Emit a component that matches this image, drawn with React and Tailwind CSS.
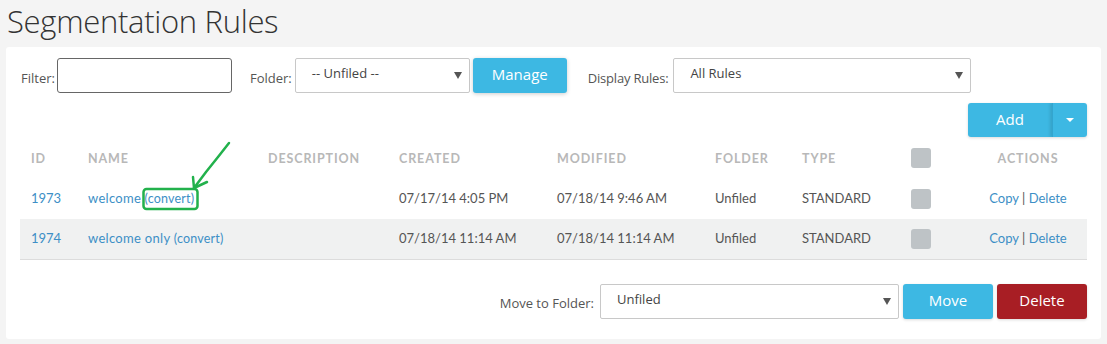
import React from 'react';

const rows = [
  { id: '1973', name: 'welcome', created: '07/17/14 4:05 PM', modified: '07/18/14 9:46 AM', folder: 'Unfiled', type: 'STANDARD' },
  { id: '1974', name: 'welcome only', created: '07/18/14 11:14 AM', modified: '07/18/14 11:14 AM', folder: 'Unfiled', type: 'STANDARD' },
];

function Select({ value, className }) {
  return (
    <div className={`flex h-[35px] items-center justify-between rounded-[2px] border border-[#c8c8c8] bg-white pl-4 pr-[7px] text-[13px] text-[#444] ${className}`}>
      <span className="-mt-[3px]">{value}</span>
      <span className="h-0 w-0 border-x-[4px] border-t-[7px] border-x-transparent border-t-[#555]" />
    </div>
  );
}

function Check() {
  return <div className="h-5 w-5 rounded-[3px] bg-[#bec3c6]" />;
}

export default function App() {
  return (
    <div className="relative min-h-[344px] bg-[#f4f4f4] px-[6px] pt-[1px] font-['Open_Sans',sans-serif]">
      <h1 className="pl-px text-[31px] font-light leading-[40px] tracking-[-0.3px] text-[#333]">Segmentation Rules</h1>

      <div className="mt-[6px] rounded-[3px] bg-white px-[14px] pb-[20px] pt-[11px]">
        <div className="flex items-center">
          <span className="mt-[6px] pl-px pr-[2px] text-[13px] text-[#555]">Filter:</span>
          <div className="h-[35px] w-[175px] rounded-[3px] border border-[#666]" />
          <span className="ml-[18px] mt-[6px] pr-[3px] text-[13px] text-[#555]">Folder:</span>
          <Select value="-- Unfiled --" className="w-[175px]" />
          <button className="ml-[3px] h-[35px] w-[94px] rounded-[3px] bg-[#3db8e3] pb-[2px] text-[15px] text-white shadow-[0_1px_4px_rgba(0,0,0,0.2)]">Manage</button>
          <span className="ml-[21px] mt-[6px] pr-[5px] text-[13px] tracking-[-0.2px] text-[#555]">Display Rules:</span>
          <Select value="All Rules" className="w-[298px]" />
        </div>

        <div className="mt-[10px] flex justify-end">
          <div className="flex h-[34px] overflow-hidden rounded-[3px] bg-[#3db8e3] shadow-[0_1px_3px_rgba(0,0,0,0.15)]">
            <button className="w-[84px] pb-[2px] text-[15px] text-white">Add</button>
            <div className="flex w-[35px] items-center justify-center border-l border-[#32a5cf] shadow-[-2px_0_3px_rgba(0,0,0,0.12)]">
              <span className="h-0 w-0 border-x-[4px] border-t-[4px] border-x-transparent border-t-white" />
            </div>
          </div>
        </div>

        <table className="w-full table-fixed border-collapse font-['Lato',sans-serif]">
          <colgroup>
            <col className="w-[57px]" />
            <col className="w-[180px]" />
            <col className="w-[131px]" />
            <col className="w-[158px]" />
            <col className="w-[158px]" />
            <col className="w-[87px]" />
            <col className="w-[109px]" />
            <col className="w-[67px]" />
            <col />
          </colgroup>
          <thead>
            <tr className="h-[42px] text-left text-[12.5px] font-bold uppercase tracking-[0.9px] text-[#b8b8b8]">
              <th className="pl-[11px] pt-[3px] font-bold">ID</th>
              <th className="pl-[11px] pt-[3px] font-bold">Name</th>
              <th className="pl-[11px] pt-[3px] font-bold">Description</th>
              <th className="pl-[11px] pt-[3px] font-bold">Created</th>
              <th className="pl-[11px] pt-[3px] font-bold">Modified</th>
              <th className="pl-[11px] pt-[3px] font-bold">Folder</th>
              <th className="pl-[11px] pt-[3px] font-bold">Type</th>
              <th className="pl-[11px]"><Check /></th>
              <th className="pl-[2px] pt-[3px] text-center font-bold">Actions</th>
            </tr>
          </thead>
          <tbody>
            {rows.map((r, i) => (
              <tr key={r.id} className={`h-10 text-[13px] text-[#555] ${i === 1 ? 'bg-[#f0f1f1] border-b border-[#dcdcdc]' : ''}`}>
                <td className="pl-[11px] text-[#3d8fc6]">{r.id}</td>
                <td className="pl-[11px] text-[#3d8fc6]">
                  <span className="tracking-[0.3px]">{r.name}</span>{' '}
                  <span className="text-[12.5px] tracking-[0.2px]">(convert)</span>
                </td>
                <td />
                <td className="pl-[11px]">{r.created}</td>
                <td className="pl-[11px]">{r.modified}</td>
                <td className="pl-[11px]">{r.folder}</td>
                <td className="pl-[11px]">{r.type}</td>
                <td className="pl-[11px]"><Check /></td>
                <td className="pl-[2px] text-center text-[#3d8fc6]">
                  Copy <span className="text-[#555]">|</span> Delete
                </td>
              </tr>
            ))}
          </tbody>
        </table>

        <div className="mt-[24px] flex items-center justify-end">
          <span className="mt-[6px] pr-[6px] text-[13px] text-[#555]">Move to Folder:</span>
          <Select value="Unfiled" className="w-[299px]" />
          <button className="ml-[4px] h-[35px] w-[90px] rounded-[3px] bg-[#3db8e3] pb-[2px] text-[15px] text-white shadow-[0_1px_3px_rgba(0,0,0,0.15)]">Move</button>
          <button className="ml-[4px] h-[35px] w-[90px] rounded-[3px] bg-[#a81e24] pb-[2px] text-[15px] text-white shadow-[0_1px_3px_rgba(0,0,0,0.15)]">Delete</button>
        </div>
      </div>

      <svg className="pointer-events-none absolute left-0 top-0" width="1107" height="344" fill="none" stroke="#22b14c" strokeWidth="2.5" strokeLinecap="round" strokeLinejoin="round">
        <rect x="143.5" y="189" width="54" height="20" rx="3" />
        <path d="M229 143 L218 157 L206 172 L194 188" />
        <path d="M193 177 L194 188 L207 182" />
      </svg>
    </div>
  );
}
